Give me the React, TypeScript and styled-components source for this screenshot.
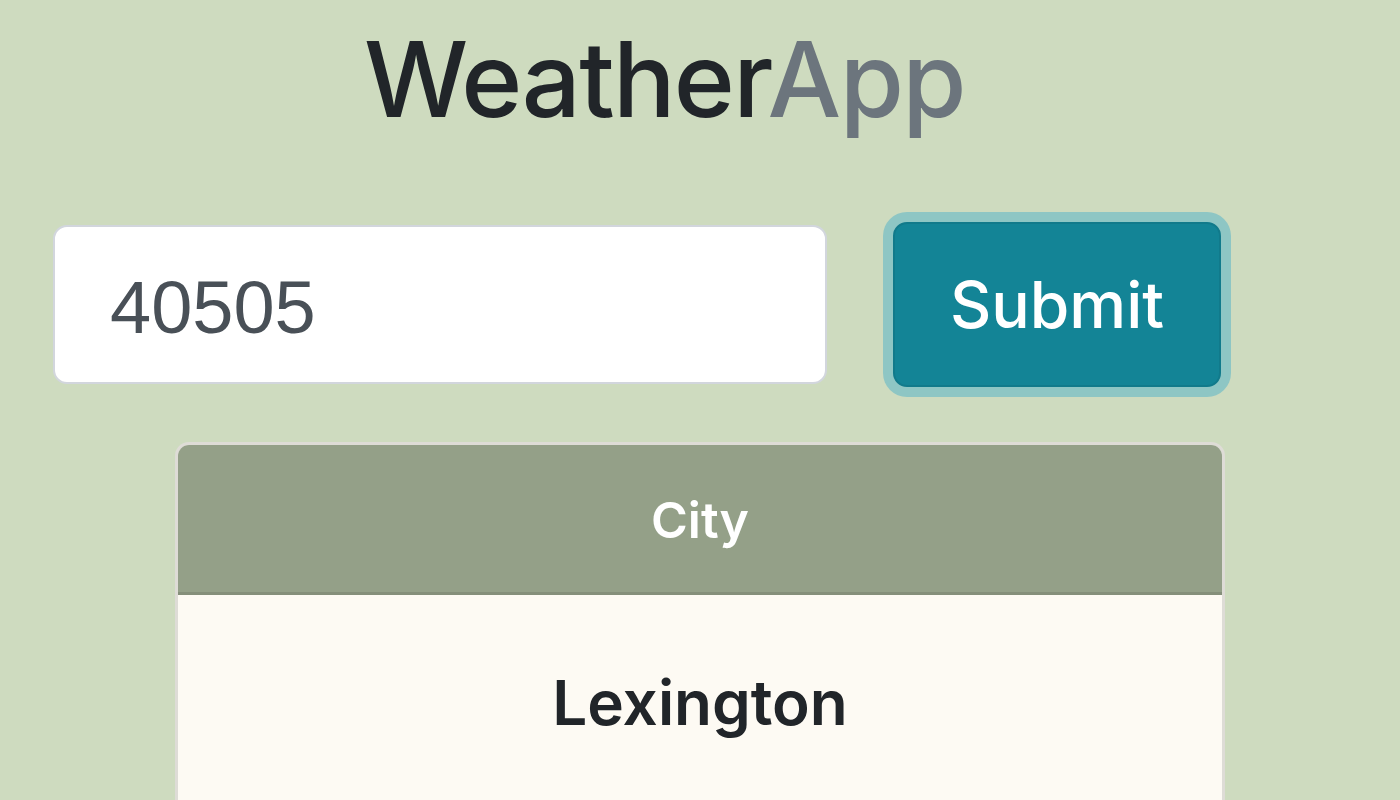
import React from "react";
import styled, { createGlobalStyle } from "styled-components";

const GlobalStyle = createGlobalStyle`
  html, body {
    margin: 0;
    padding: 0;
    background: #cedbbf;
  }
  body {
    font-family: Inter, "Liberation Sans", Arial, sans-serif;
    color: #212529;
  }
  * {
    box-sizing: border-box;
  }
`;

const Page = styled.div`
  width: 1400px;
  height: 800px;
  overflow: hidden;
  display: flex;
  flex-direction: column;
`;

const Title = styled.h1`
  margin: 0;
  padding: 17px 0 0 364px;
  font-size: 104px;
  font-weight: 500;
  line-height: 124px;
  letter-spacing: -1.7px;
  color: #212529;
`;

const Muted = styled.span`
  color: #6c757d;
`;

const SearchForm = styled.form`
  display: flex;
  align-items: center;
  margin-top: 81px;
  padding-left: 53px;
  gap: 66px;
`;

const ZipInput = styled.input`
  width: 774px;
  height: 159px;
  padding: 6px 55px 0;
  border: 2px solid #d2d6dd;
  border-radius: 14px;
  background: #fff;
  font-family: "Liberation Sans", Arial, sans-serif;
  font-size: 74px;
  color: #495057;
  outline: none;
`;

const SubmitButton = styled.button`
  width: 328px;
  height: 165px;
  border: 2px solid #117a8b;
  border-radius: 14px;
  background: #138496;
  box-shadow: 0 0 0 10px #8ec6c4;
  font-family: Inter, "Liberation Sans", Arial, sans-serif;
  font-size: 64px;
  font-weight: 500;
  color: #fff;
  cursor: pointer;
`;

const Card = styled.div`
  margin: 55px 0 0 175px;
  width: 1050px;
  border: 3px solid #dedcd6;
  border-bottom: none;
  border-radius: 14px 14px 0 0;
  overflow: hidden;
  background: #fdfaf3;
`;

const Table = styled.table`
  width: 100%;
  border-collapse: collapse;
`;

const HeadCell = styled.th`
  height: 148px;
  padding: 4px 0 0;
  background: #94a088;
  border-bottom: 3px solid #858f7a;
  font-size: 50px;
  font-weight: 600;
  color: #fff;
  text-align: center;
`;

const BodyCell = styled.td`
  height: 222px;
  padding: 0 0 4px;
  font-size: 62px;
  font-weight: 600;
  color: #212529;
  text-align: center;
`;

export default function App() {
  return (
    <Page>
      <GlobalStyle />
      <Title>
        Weather<Muted>App</Muted>
      </Title>
      <SearchForm onSubmit={(e) => e.preventDefault()}>
        <ZipInput type="text" defaultValue="40505" />
        <SubmitButton type="submit">Submit</SubmitButton>
      </SearchForm>
      <Card>
        <Table>
          <thead>
            <tr>
              <HeadCell>City</HeadCell>
            </tr>
          </thead>
          <tbody>
            <tr>
              <BodyCell>Lexington</BodyCell>
            </tr>
          </tbody>
        </Table>
      </Card>
    </Page>
  );
}
